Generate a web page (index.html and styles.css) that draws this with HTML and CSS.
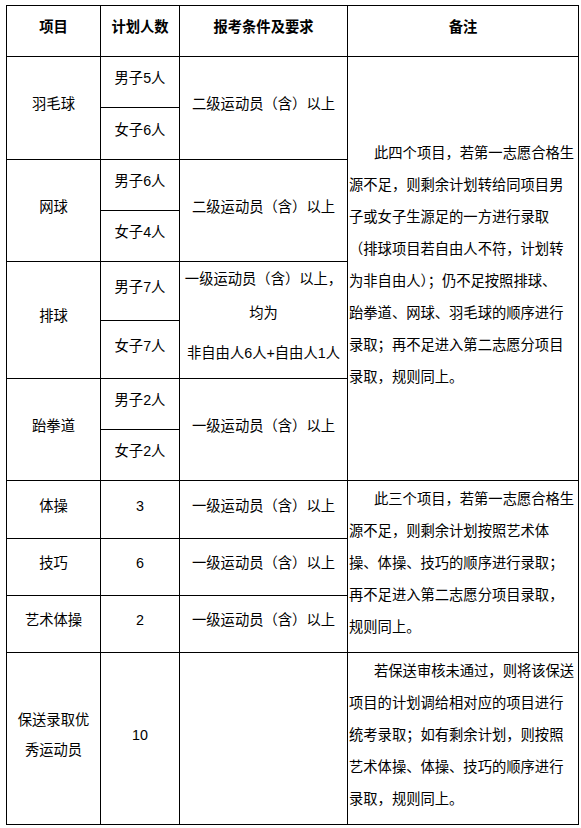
FILE: index.html
```html
<!DOCTYPE html>
<html lang="zh-CN">
<head>
<meta charset="utf-8">
<title>招生计划</title>
<link rel="stylesheet" href="styles.css">
</head>
<body>
<table class="plan">
  <colgroup>
    <col class="c1">
    <col class="c2">
    <col class="c3">
    <col class="c4">
  </colgroup>
  <thead>
    <tr class="h51">
      <th>项目</th>
      <th>计划人数</th>
      <th>报考条件及要求</th>
      <th>备注</th>
    </tr>
  </thead>
  <tbody>
    <tr class="h51">
      <td rowspan="2">羽毛球</td>
      <td>男子5人</td>
      <td rowspan="2">二级运动员（含）以上</td>
      <td rowspan="8" class="note">
        <span class="indent">此四个项目，若第一志愿合格生</span><br>源不足，则剩余计划转给同项目男<br>子或女子生源足的一方进行录取<br>（排球项目若自由人不符，计划转<br>为非自由人）；仍不足按照排球、<br>跆拳道、网球、羽毛球的顺序进行<br>录取；再不足进入第二志愿分项目<br>录取，规则同上。
      </td>
    </tr>
    <tr class="h52">
      <td>女子6人</td>
    </tr>
    <tr class="h51">
      <td rowspan="2">网球</td>
      <td>男子6人</td>
      <td rowspan="2">二级运动员（含）以上</td>
    </tr>
    <tr class="h51">
      <td>女子4人</td>
    </tr>
    <tr class="h59">
      <td rowspan="2">排球</td>
      <td>男子7人</td>
      <td rowspan="2" class="multi">
        <div class="ml">一级运动员（含）以上，</div>
        <div class="ml">均为</div>
        <div class="ml ml-last">非自由人6人+自由人1人</div>
      </td>
    </tr>
    <tr class="h58">
      <td>女子7人</td>
    </tr>
    <tr class="h51">
      <td rowspan="2">跆拳道</td>
      <td>男子2人</td>
      <td rowspan="2">一级运动员（含）以上</td>
    </tr>
    <tr class="h51">
      <td>女子2人</td>
    </tr>
    <tr class="h58">
      <td>体操</td>
      <td>3</td>
      <td>一级运动员（含）以上</td>
      <td rowspan="3" class="note">
        <span class="indent">此三个项目，若第一志愿合格生</span><br>源不足，则剩余计划按照艺术体<br>操、体操、技巧的顺序进行录取；<br>再不足进入第二志愿分项目录取，<br>规则同上。
      </td>
    </tr>
    <tr class="h57">
      <td>技巧</td>
      <td>6</td>
      <td>一级运动员（含）以上</td>
    </tr>
    <tr class="h57">
      <td>艺术体操</td>
      <td>2</td>
      <td>一级运动员（含）以上</td>
    </tr>
    <tr class="h172">
      <td class="two">保送录取优<br>秀运动员</td>
      <td>10</td>
      <td></td>
      <td class="note">
        <span class="indent">若保送审核未通过，则将该保送</span><br>项目的计划调给相对应的项目进行<br>统考录取；如有剩余计划，则按照<br>艺术体操、体操、技巧的顺序进行<br>录取，规则同上。
      </td>
    </tr>
  </tbody>
</table>
</body>
</html>
```

FILE: styles.css
```css
html, body {
  margin: 0;
  padding: 0;
  background: #ffffff;
}

body {
  font-family: "Liberation Sans", "Noto Sans CJK SC", sans-serif;
  font-size: 14.3px;
  color: #000000;
}

.plan {
  border-collapse: collapse;
  table-layout: fixed;
  width: 572px;
  margin: 5px 0 0 6px;
}

.c1 { width: 94px; }
.c2 { width: 79px; }
.c3 { width: 168px; }
.c4 { width: 231px; }

.plan th,
.plan td {
  border: 1px solid #000000;
  padding: 0 0 8px 0;
  text-align: center;
  vertical-align: middle;
  line-height: 20px;
  white-space: nowrap;
}

.plan th {
  font-weight: bold;
}

.h51 { height: 51px; }
.h52 { height: 52px; }
.h57 { height: 57px; }
.h58 { height: 58px; }
.h59 { height: 59px; }
.h172 { height: 172px; }

.plan td.note {
  text-align: left;
  line-height: 32px;
  padding: 0 0 8px 1px;
  overflow: visible;
}

.indent {
  padding-left: 25px;
}

.plan td.multi {
  vertical-align: top;
  padding: 0;
}

.ml {
  line-height: 34px;
}

.ml-last {
  margin-top: 6px;
}

.plan td.two {
  line-height: 30px;
}
```
